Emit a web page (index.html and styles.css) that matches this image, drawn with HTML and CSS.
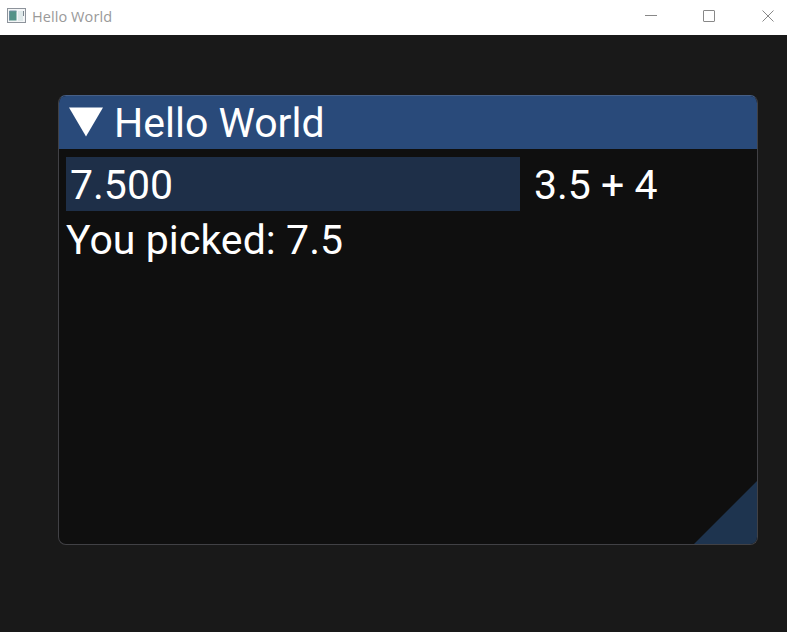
FILE: index.html
```html
<!DOCTYPE html>
<html lang="en">
<head>
<meta charset="utf-8">
<title>Hello World</title>
<link rel="stylesheet" href="styles.css">
</head>
<body>
<header class="titlebar">
  <svg class="app-icon" width="19" height="16" viewBox="0 0 19 16">
    <rect x=".5" y=".5" width="18" height="14" fill="#f4f6f7" stroke="#8d939b"/>
    <rect x="2.5" y="3" width="7" height="9.5" fill="#539287"/>
    <path d="M2.5 12.5V3h7" fill="none" stroke="#7190a0"/>
    <rect x="11" y="3" width="5" height="10" fill="#dfe9ea"/>
    <path d="M16.5 3v5" stroke="#7b8790"/>
  </svg>
  <span class="caption">Hello World</span>
  <svg class="controls" width="132" height="14" viewBox="0 0 132 14" fill="none" stroke="#888">
    <path d="M0 6.5h12"/>
    <rect x="58.5" y="1.5" width="11" height="11" rx=".5"/>
    <path d="M117.5 1.5l11 11M128.5 1.5l-11 11"/>
  </svg>
</header>
<main class="viewport">
  <section class="window">
    <div class="window-title">
      <svg class="arrow" width="34" height="30" viewBox="0 0 34 30"><path d="M0 .5h34L17 29.500z" fill="#fff"/></svg>
      <span class="title-text">Hello World</span>
    </div>
    <div class="content">
      <div class="row">
        <div class="field"><span class="value">7.500</span></div>
        <span class="label">3.5 + 4</span>
      </div>
      <div class="result">You picked: 7.5</div>
    </div>
    <svg class="grip" width="63" height="63" viewBox="0 0 63 63"><path d="M63 0v63H0z" fill="#1e344f"/></svg>
  </section>
</main>
</body>
</html>
```
FILE: styles.css
```css
* { box-sizing: border-box; }
body {
  margin: 0;
  height: 632px;
  display: flex;
  flex-direction: column;
  background: #191919;
  overflow: hidden;
}
.titlebar {
  height: 35px;
  flex: none;
  display: flex;
  align-items: flex-start;
  padding: 8px 10px 0 7px;
  background: #fff;
}
.caption {
  margin-left: 6px;
  font: 14.5px/18px "Open Sans", sans-serif;
  letter-spacing: 0.08px;
  color: #999;
}
.controls { margin-left: auto; margin-top: 1px; }
.viewport { padding: 60px 29px 0 58px; }
.window {
  position: relative;
  height: 450px;
  border: 1px solid #414145;
  border-top-color: #465f86;
  border-radius: 8px;
  overflow: hidden;
  background: #0f0f0f;
  color: #fff;
  font: 41px/54px Roboto, sans-serif;
  white-space: nowrap;
}
.window-title {
  height: 53px;
  display: flex;
  padding: 0 10px;
  background: #294a7a;
}
.arrow { margin-top: 11px; }
.title-text { margin-left: 11px; }
.content { padding: 8px 7px; }
.row { display: flex; line-height: 56px; height: 54px; }
.field {
  width: 454px;
  height: 54px;
  padding-left: 4px;
  background: #1e2f48;
}
.label { margin-left: 14px; }
.result { margin-top: 2px; letter-spacing: 0.07px; }
.grip {
  position: absolute;
  right: 0;
  bottom: 0;
}
```
